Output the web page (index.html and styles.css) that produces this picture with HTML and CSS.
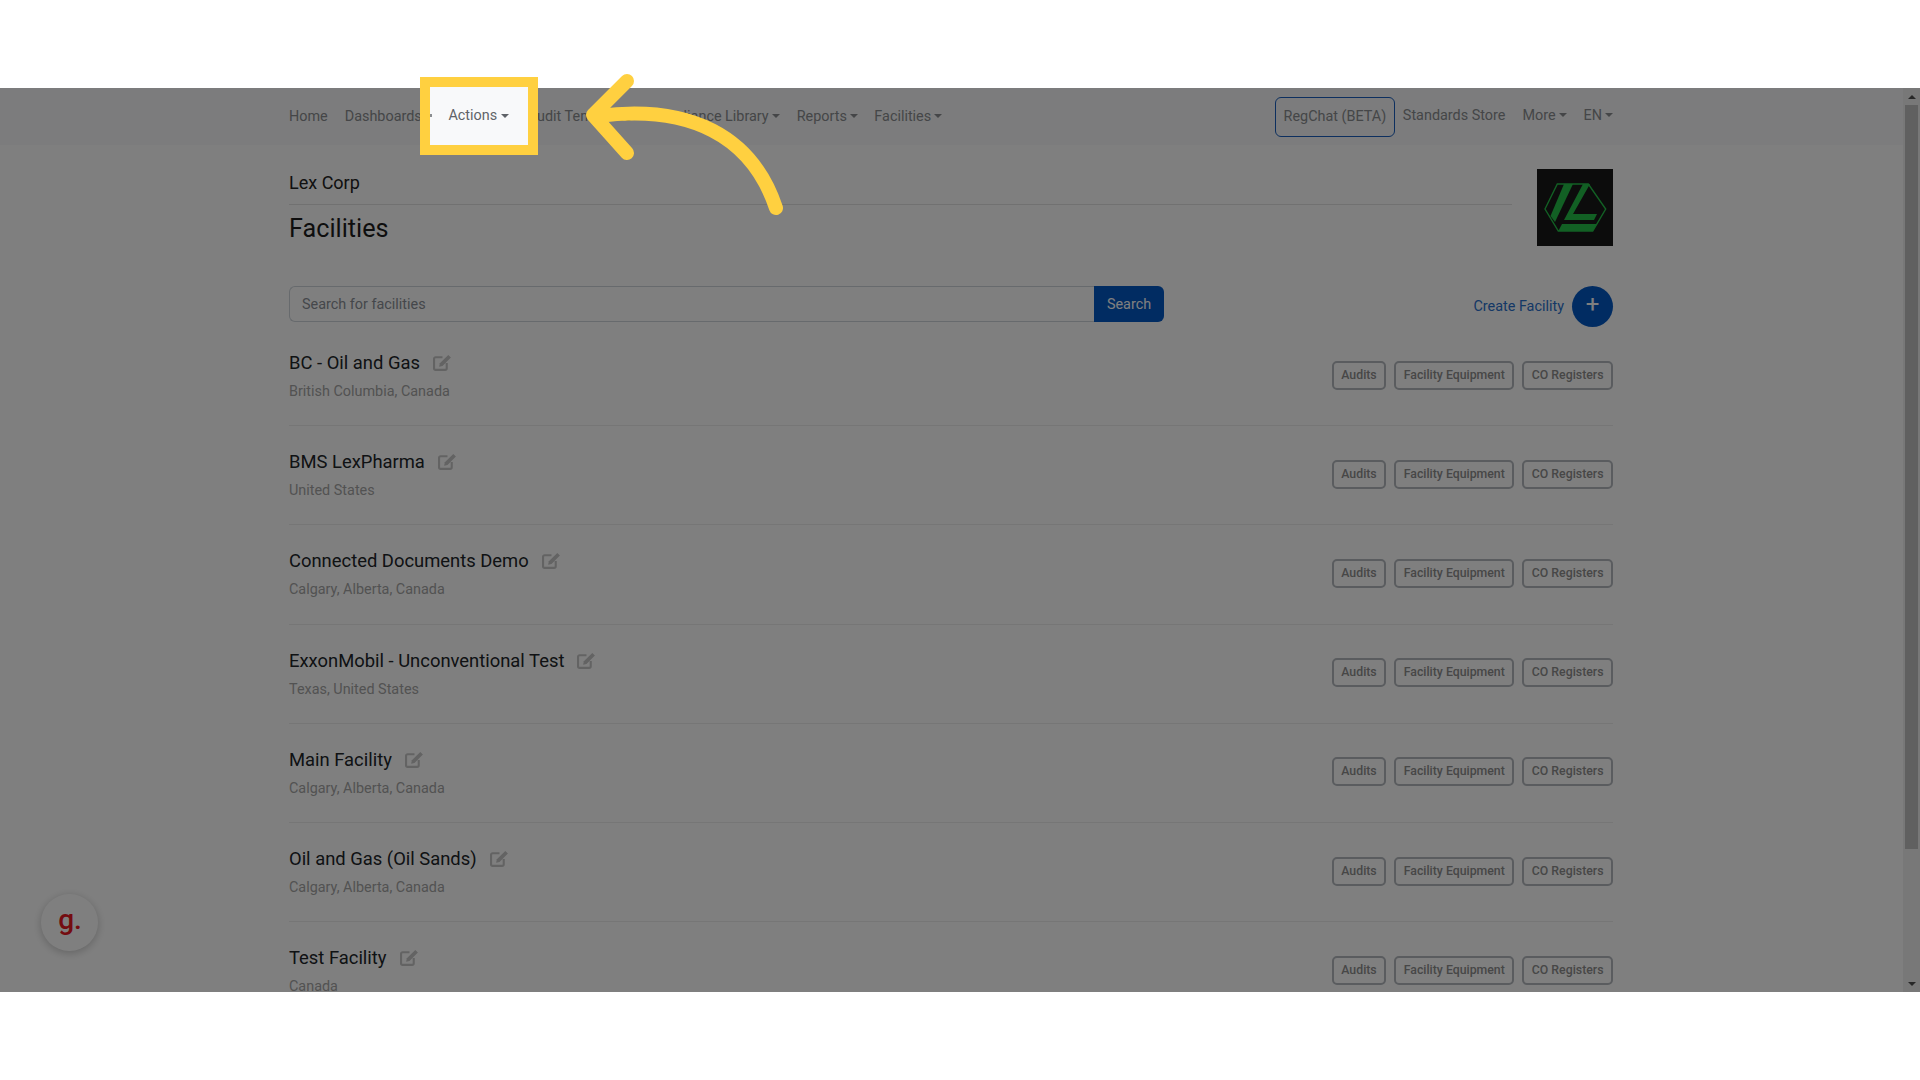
FILE: index.html
```html
<!DOCTYPE html>
<html lang="en">
<head>
<meta charset="utf-8">
<title>Facilities</title>
<link rel="stylesheet" href="styles.css">
</head>
<body>
<div class="stage">
  <div class="viewport">
    <nav class="navbar">
      <a class="nav-link">Home</a>
      <a class="nav-link caret">Dashboards</a>
      <a class="nav-link caret spot">Actions</a>
      <a class="nav-link templates">Audit Templates</a>
      <a class="nav-link caret">Compliance Library</a>
      <a class="nav-link caret reports">Reports</a>
      <a class="nav-link caret">Facilities</a>
      <div class="nav-right">
        <a class="regchat">RegChat (BETA)</a>
        <a class="nav-link raised">Standards Store</a>
        <a class="nav-link raised caret">More</a>
        <a class="nav-link raised caret last">EN</a>
      </div>
    </nav>
    <main class="content">
      <header class="page-head">
        <div class="titles">
          <div class="org">Lex Corp</div>
          <h1 class="page-title">Facilities</h1>
        </div>
        <div class="logo">
          <svg width="76" height="77" viewBox="0 0 76 77">
            <path class="hex" d="M8 40 20.300 15H51.300L68.700 40 55.700 62H21.300Z"/>
            <path class="mark" d="M27 15H36L18 53 13.500 47Z"/>
            <path class="mark" d="M46 15H53L36 45H60L57 51H27Z"/>
            <path class="mark" d="M25 55H60L55.700 62H21.300Z"/>
          </svg>
        </div>
      </header>
      <div class="toolbar">
        <form class="search">
          <input class="search-input" type="text" placeholder="Search for facilities">
          <button class="search-btn" type="button">Search</button>
        </form>
        <div class="create">
          <a class="create-label">Create Facility</a>
          <span class="create-btn">+</span>
        </div>
      </div>
      <ul class="list">
        <li class="row">
          <div class="info">
            <div class="name">BC - Oil and Gas<svg class="edit" viewBox="0 0 18 16"><path d="M13 8.500V13.500A1.500 1.500 0 0 1 11.500 15H2.500A1.500 1.500 0 0 1 1 13.500V4.500A1.500 1.500 0 0 1 2.500 3H9"/><path class="pen" d="M14.500 .8 17 3.300 9 11.300 5.800 12 6.500 8.800Z"/></svg></div>
            <div class="place">British Columbia, Canada</div>
          </div>
          <div class="actions"><a class="tag">Audits</a><a class="tag">Facility Equipment</a><a class="tag">CO Registers</a></div>
        </li>
        <li class="row">
          <div class="info">
            <div class="name">BMS LexPharma<svg class="edit" viewBox="0 0 18 16"><path d="M13 8.500V13.500A1.500 1.500 0 0 1 11.500 15H2.500A1.500 1.500 0 0 1 1 13.500V4.500A1.500 1.500 0 0 1 2.500 3H9"/><path class="pen" d="M14.500 .8 17 3.300 9 11.300 5.800 12 6.500 8.800Z"/></svg></div>
            <div class="place">United States</div>
          </div>
          <div class="actions"><a class="tag">Audits</a><a class="tag">Facility Equipment</a><a class="tag">CO Registers</a></div>
        </li>
        <li class="row">
          <div class="info">
            <div class="name">Connected Documents Demo<svg class="edit" viewBox="0 0 18 16"><path d="M13 8.500V13.500A1.500 1.500 0 0 1 11.500 15H2.500A1.500 1.500 0 0 1 1 13.500V4.500A1.500 1.500 0 0 1 2.500 3H9"/><path class="pen" d="M14.500 .8 17 3.300 9 11.300 5.800 12 6.500 8.800Z"/></svg></div>
            <div class="place">Calgary, Alberta, Canada</div>
          </div>
          <div class="actions"><a class="tag">Audits</a><a class="tag">Facility Equipment</a><a class="tag">CO Registers</a></div>
        </li>
        <li class="row">
          <div class="info">
            <div class="name">ExxonMobil - Unconventional Test<svg class="edit" viewBox="0 0 18 16"><path d="M13 8.500V13.500A1.500 1.500 0 0 1 11.500 15H2.500A1.500 1.500 0 0 1 1 13.500V4.500A1.500 1.500 0 0 1 2.500 3H9"/><path class="pen" d="M14.500 .8 17 3.300 9 11.300 5.800 12 6.500 8.800Z"/></svg></div>
            <div class="place">Texas, United States</div>
          </div>
          <div class="actions"><a class="tag">Audits</a><a class="tag">Facility Equipment</a><a class="tag">CO Registers</a></div>
        </li>
        <li class="row">
          <div class="info">
            <div class="name">Main Facility<svg class="edit" viewBox="0 0 18 16"><path d="M13 8.500V13.500A1.500 1.500 0 0 1 11.500 15H2.500A1.500 1.500 0 0 1 1 13.500V4.500A1.500 1.500 0 0 1 2.500 3H9"/><path class="pen" d="M14.500 .8 17 3.300 9 11.300 5.800 12 6.500 8.800Z"/></svg></div>
            <div class="place">Calgary, Alberta, Canada</div>
          </div>
          <div class="actions"><a class="tag">Audits</a><a class="tag">Facility Equipment</a><a class="tag">CO Registers</a></div>
        </li>
        <li class="row">
          <div class="info">
            <div class="name">Oil and Gas (Oil Sands)<svg class="edit" viewBox="0 0 18 16"><path d="M13 8.500V13.500A1.500 1.500 0 0 1 11.500 15H2.500A1.500 1.500 0 0 1 1 13.500V4.500A1.500 1.500 0 0 1 2.500 3H9"/><path class="pen" d="M14.500 .8 17 3.300 9 11.300 5.800 12 6.500 8.800Z"/></svg></div>
            <div class="place">Calgary, Alberta, Canada</div>
          </div>
          <div class="actions"><a class="tag">Audits</a><a class="tag">Facility Equipment</a><a class="tag">CO Registers</a></div>
        </li>
        <li class="row">
          <div class="info">
            <div class="name">Test Facility<svg class="edit" viewBox="0 0 18 16"><path d="M13 8.500V13.500A1.500 1.500 0 0 1 11.500 15H2.500A1.500 1.500 0 0 1 1 13.500V4.500A1.500 1.500 0 0 1 2.500 3H9"/><path class="pen" d="M14.500 .8 17 3.300 9 11.300 5.800 12 6.500 8.800Z"/></svg></div>
            <div class="place">Canada</div>
          </div>
          <div class="actions"><a class="tag">Audits</a><a class="tag">Facility Equipment</a><a class="tag">CO Registers</a></div>
        </li>
      </ul>
    </main>
  </div>
  <div class="scrollbar">
    <span class="sb-btn"><i class="tri up"></i></span>
    <span class="sb-track"><span class="sb-thumb"></span></span>
    <span class="sb-btn"><i class="tri down"></i></span>
  </div>
  <div class="widget">g.</div>
  <div class="dim"></div>
  <svg class="arrow" width="220" height="150" viewBox="570 70 220 150">
    <path d="M776 208C752 136 690 104 598 116M627 81 593 115 627 153"/>
  </svg>
</div>
</body>
</html>
```
FILE: styles.css
```css
* { box-sizing: border-box; }
html, body { margin: 0; height: 100%; }
body { background: #fff; padding: 88px 0; font-family: Roboto, "Liberation Sans", sans-serif; overflow: hidden; }
.stage { position: relative; height: 904px; display: flex; }
.viewport { flex: 1; min-width: 0; display: flex; flex-direction: column; background: #fff; }
.navbar { height: 57px; flex: none; display: flex; align-items: center; padding: 0 290px 0 289px; background: #f8f9fa; font-size: 14.4px; }
.nav-link { color: #8a8d90; margin-right: 17px; white-space: nowrap; line-height: 22px; }
.caret::after { content: ""; display: inline-block; margin-left: 3px; vertical-align: 3px; border-top: 4.8px solid currentColor; border-left: 4.8px solid transparent; border-right: 4.8px solid transparent; }
.spot { position: relative; z-index: 2; align-self: flex-start; display: flex; align-items: center; justify-content: center; width: 98px; height: 58px; margin: -1px 0 0 -20px; background: #f8f9fa; outline: 10px solid #ffd040; color: #5f6368; }
.spot::after { margin-left: 4px; }
.spot::before { content: ""; position: absolute; left: 0; top: 27px; width: 2px; height: 3px; background: #8a8d90; }
.templates { margin-right: 13.4px; }
.reports { margin-right: 16.5px; }
.nav-right { margin-left: auto; display: flex; align-items: center; }
.regchat { display: block; width: 120px; height: 40px; margin-right: 8px; line-height: 38px; text-align: center; color: #8a8d90; border: 1px solid #1a5fbf; border-radius: 6px; white-space: nowrap; }
.raised { position: relative; top: -1px; }
.last { margin-right: 0; }
.content { flex: 1; min-height: 0; overflow: hidden; padding: 24px 290px 0 289px; }
.page-head { display: flex; }
.titles { flex: 1; min-width: 0; margin-right: 25px; }
.org { height: 36px; border-bottom: 1px solid #e2e2e2; font-size: 18px; line-height: 27px; color: #222; }
.page-title { margin: 0; padding-top: 6px; font-size: 25.2px; font-weight: 400; line-height: 36px; color: #1c1c1c; }
.logo { flex: none; width: 76px; height: 77px; background: #181818; }
.logo svg { display: block; }
.hex { fill: none; stroke: #24c048; stroke-width: 1.4; }
.mark { fill: #24c048; }
.toolbar { display: flex; justify-content: space-between; margin: 39px 0 0; height: 41px; }
.search { display: flex; width: 875px; height: 36px; }
.search-input { flex: 1; min-width: 0; padding: 0 12px; border: 1px solid #ced4da; border-right: 0; border-radius: 6px 0 0 6px; background: #fff; font: 14.4px Roboto, sans-serif; outline: 0; }
.search-input::placeholder { color: #8a8f96; opacity: 1; }
.search-btn { width: 70px; border: 0; border-radius: 0 6px 6px 0; background: #0358c4; color: #fff; font: 14.4px Roboto, sans-serif; padding: 0; }
.create { display: flex; align-items: center; gap: 8px; }
.create-label { color: #2a70cc; font-size: 14.4px; }
.create-btn { width: 41px; height: 41px; border-radius: 50%; background: #0358c4; color: #fff; font-size: 24px; line-height: 36px; text-align: center; }
.list { list-style: none; margin: 0; padding: 0; }
.row { height: 99.2px; display: flex; justify-content: space-between; align-items: center; border-bottom: 1px solid #ececec; }
.row:last-child { border-bottom: 0; }
.info { align-self: flex-start; padding-top: 22px; }
.name { display: flex; align-items: center; font-size: 18.4px; line-height: 27px; color: #212529; }
.edit { width: 19px; height: 17px; margin-left: 13px; fill: none; stroke: #c6c6c6; stroke-width: 2; }
.edit .pen { fill: #c6c6c6; stroke: none; }
.place { margin-top: 5px; font-size: 14.4px; line-height: 21px; color: #a5a5a5; }
.actions { display: flex; gap: 8px; margin-bottom: 2px; }
.tag { height: 29px; padding: 0 7.5px; border: 2px solid #b4b9be; border-radius: 5px; font-size: 12.3px; font-weight: 500; line-height: 25px; color: #8e8e8e; white-space: nowrap; }
.scrollbar { flex: none; width: 17px; display: flex; flex-direction: column; background: #f1f1f1; }
.sb-btn { flex: none; height: 17px; display: flex; align-items: center; justify-content: center; }
.sb-track { flex: 1; min-height: 0; padding: 0 2px; }
.sb-thumb { display: block; height: 744px; background: #c1c1c1; }
.tri { width: 0; height: 0; border-left: 4px solid transparent; border-right: 4px solid transparent; }
.tri.up { border-bottom: 4px solid #505050; }
.tri.down { border-top: 4px solid #505050; }
.widget { position: absolute; left: 41px; top: 806px; width: 57px; height: 57px; padding-left: 1px; border-radius: 50%; background: #fff; box-shadow: 0 2px 8px rgba(0,0,0,.22); color: #e81822; font-size: 28px; font-weight: 500; line-height: 52px; text-align: center; }
.dim { position: absolute; inset: 0; z-index: 1; background: rgba(0,0,0,.5); }
.arrow { position: absolute; left: 570px; top: -18px; z-index: 3; fill: none; stroke: #ffd040; stroke-width: 14; stroke-linecap: round; stroke-linejoin: round; }
```
